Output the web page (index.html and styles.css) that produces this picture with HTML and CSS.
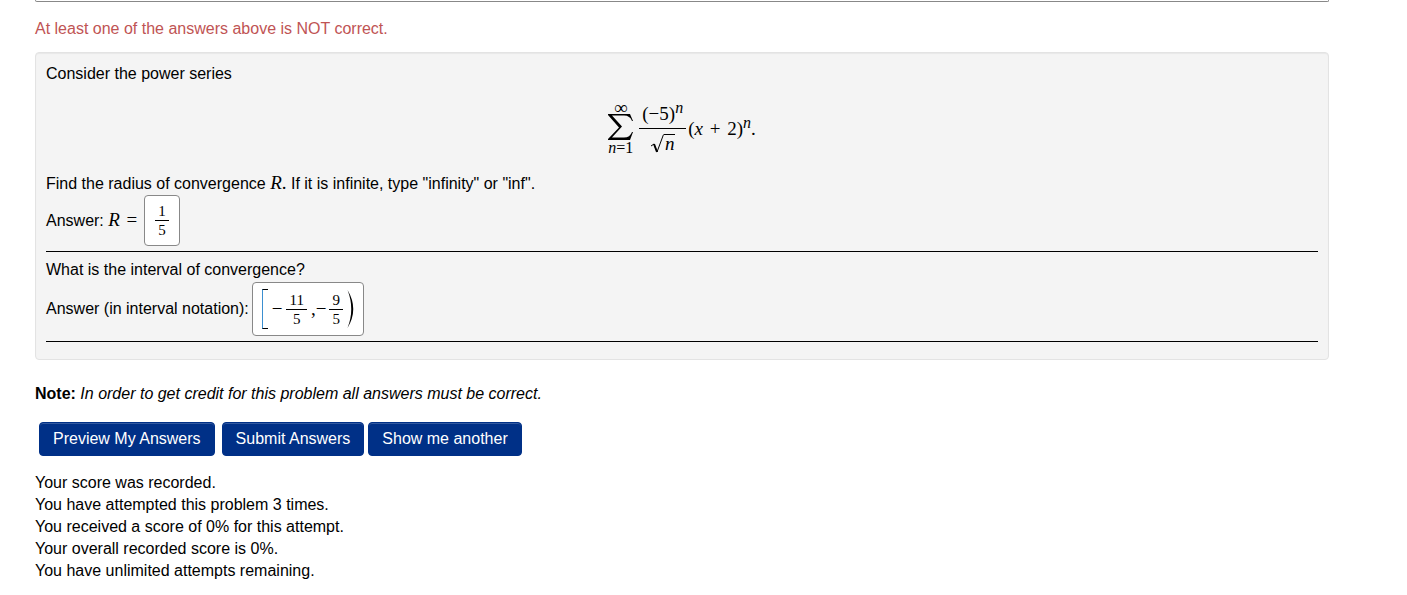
FILE: index.html
```html
<!DOCTYPE html>
<html lang="en">
<head>
  <meta charset="UTF-8">
  <title>Power series</title>
  <link rel="stylesheet" href="styles.css">
</head>
<body>
  <div class="page">
    <div class="results-box"></div>
    <p class="result-message">At least one of the answers above is NOT correct.</p>

    <form>
      <div class="problem">
        <p>Consider the power series</p>

        <div class="math equation">
          <span class="sum">
            <span class="limit-top">∞</span>
            <svg class="sigma" width="25" height="26" viewBox="0 0 25 26" aria-hidden="true">
              <path d="M0 0H22L25 7H24Q22 1.5 16 1.5H4L14 12.5L4 23.5H16Q22 23.5 24 18H25L22 26H0V25L11 13.5L0 1Z"/>
            </svg>
            <span class="limit"><i>n</i>=1</span>
          </span>
          <span class="fraction">
            <span class="top">(−5)<sup>n</sup></span>
            <span class="bottom">
              <svg class="radical" width="14" height="19" viewBox="0 0 14 19" aria-hidden="true">
                <path d="M1 12L4 10L7 18L13.5 0.5" fill="none" stroke="#000"/>
                <path d="M4 10L7 18" stroke="#000" stroke-width="2"/>
              </svg><i class="root">n</i>
            </span>
          </span>
          <span class="factor">(<i>x</i> <span class="plus">+</span> 2)<sup>n</sup>.</span>
        </div>

        <p>Find the radius of convergence <i class="math">R</i><span class="math">.</span> If it is infinite, type "infinity" or "inf".</p>
        <div class="answer">
          <span id="radius-label">Answer: <span class="math"><i>R</i> <span class="equals">=</span></span></span>
          <span class="math answer-box radius-box" role="textbox" tabindex="0" aria-labelledby="radius-label">
            <span class="fraction small"><span class="top">1</span><span class="bottom">5</span></span>
          </span>
        </div>
        <hr>

        <p>What is the interval of convergence?</p>
        <div class="answer">
          <span id="interval-label">Answer (in interval notation):</span>
          <span class="math answer-box interval-box" role="textbox" tabindex="0" aria-labelledby="interval-label">
            <span class="bracket"></span>
            <span class="minus">−</span>
            <span class="fraction small"><span class="top">11</span><span class="bottom">5</span></span>
            <span class="comma">,</span>
            <span class="minus">−</span>
            <span class="fraction small"><span class="top">9</span><span class="bottom">5</span></span>
            <svg class="paren" width="7" height="38" viewBox="0 0 7 38" aria-hidden="true">
              <path d="M0.5 0Q12 19 0.5 38Q8 19 0.5 0Z"/>
            </svg>
          </span>
        </div>
        <hr>
      </div>

      <p class="note"><b>Note:</b> <em>In order to get credit for this problem all answers must be correct.</em></p>

      <div class="buttons">
        <button type="button" class="btn preview">Preview My Answers</button>
        <button type="button" class="btn">Submit Answers</button>
        <button type="button" class="btn">Show me another</button>
      </div>
    </form>

    <div class="score">
      Your score was recorded.<br>
      You have attempted this problem 3 times.<br>
      You received a score of 0% for this attempt.<br>
      Your overall recorded score is 0%.<br>
      You have unlimited attempts remaining.
    </div>
  </div>
</body>
</html>
```
FILE: styles.css
```css
body {
  margin: 0;
  background: #fff;
  color: #000;
  font-family: "Liberation Sans", Arial, sans-serif;
  font-size: 16px;
  line-height: 22px;
}

p {
  margin: 0;
}

.page {
  padding: 0 78px 12px 35px;
}

/* bottom edge of the results table */
.results-box {
  height: 1px;
  border: 1px solid #888;
  border-top: 0;
  border-radius: 0 0 4px 4px;
}

.result-message {
  padding: 16px 0 12px;
  color: #bf5454;
}

.problem {
  padding: 10px;
  border: 1px solid #e3e3e3;
  border-radius: 4px;
  background: #f4f4f4;
  box-shadow: inset 0 1px 1px rgba(0, 0, 0, 0.05);
}

.problem hr {
  height: 1px;
  margin: 5px 0 7px;
  border: 0;
  background: #000;
}

/* math */
.math {
  font-family: "Liberation Serif", "Times New Roman", serif;
  font-size: 19px;
  line-height: 20px;
}

.math sup {
  font-size: 16px;
  font-style: italic;
  line-height: 0;
}

.equation {
  display: flex;
  justify-content: center;
  align-items: center;
  padding: 16px 0 17px;
}

.sum {
  display: flex;
  flex-direction: column;
  align-items: center;
  margin-right: 6px;
  font-size: 16px;
  line-height: 16px;
}

.limit-top {
  font-size: 19px;
  line-height: 13px;
}

.sigma {
  display: block;
}

.fraction {
  display: inline-flex;
  flex-direction: column;
  align-items: center;
}

.fraction .top {
  padding: 0 3px;
  border-bottom: 1px solid #000;
}

.equation .top {
  padding-bottom: 4px;
}

.fraction .bottom {
  display: flex;
  align-items: flex-end;
  padding-top: 5px;
}

.root {
  padding: 0 1px;
  border-top: 1px solid #000;
  line-height: 18px;
}

.factor {
  padding-left: 2px;
}

.plus {
  padding: 0 2px;
}

.equals {
  padding: 0 4px 0 2px;
}

.fraction.small {
  font-size: 15px;
  line-height: 18px;
}

.small .bottom {
  padding-top: 0;
}

/* answers */
.answer {
  display: flex;
  align-items: center;
}

.answer-box {
  display: flex;
  align-items: center;
  box-sizing: border-box;
  margin-left: 3px;
  border: 1px solid #888;
  border-radius: 4px;
  background: #fff;
}

.radius-box {
  padding: 6px 10px;
}

.interval-box {
  margin-top: 1px;
  padding: 6px 9px;
}

.bracket {
  width: 5px;
  height: 38px;
  border: 1px solid #000;
  border-left-color: #3b8fd0;
  border-right: 0;
}

.minus {
  padding: 0 4px;
}

.comma {
  padding-left: 4px;
}

.comma + .minus {
  padding: 0 3px 0 0;
}

.paren {
  margin-left: 4px;
}

.note {
  padding: 23px 0 17px;
}

.buttons {
  display: flex;
  gap: 4px;
  padding-left: 4px;
}

.btn {
  padding: 5px 13px;
  border: 1px solid #003087;
  border-radius: 4px;
  background: #003087;
  box-shadow: inset 0 1px 0 rgba(255, 255, 255, 0.2);
  color: #fff;
  font-family: inherit;
  font-size: 16px;
  line-height: 22px;
}

.btn.preview {
  margin-right: 3px;
}

.score {
  padding-top: 16px;
}
```
